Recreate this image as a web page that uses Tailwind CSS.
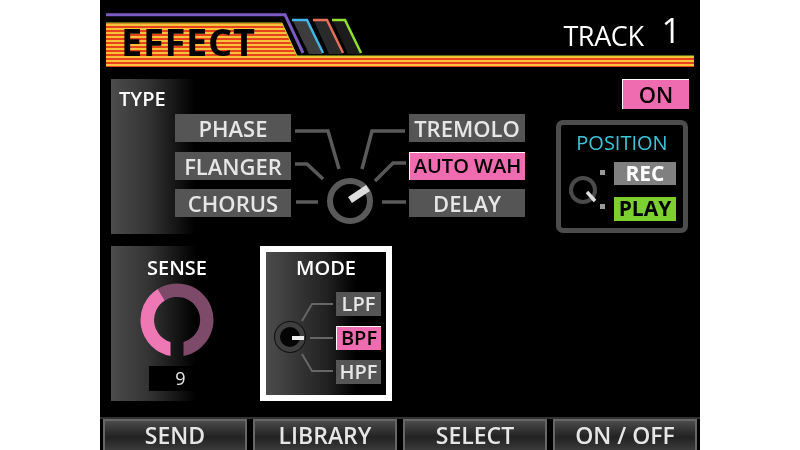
<!DOCTYPE html>
<html lang="en">
  <head>
    <meta charset="UTF-8" />
    <title>Effect</title>
    <script src="https://cdn.jsdelivr.net/npm/@tailwindcss/browser@4"></script>
  </head>
  <body class="bg-white font-['Open_Sans',sans-serif]">
    <div class="w-[600px] h-[450px] mx-auto bg-black flex flex-col text-[#e6e6e6] overflow-hidden blur-[0.3px]">
      <!-- Header -->
      <div class="relative h-[79px] shrink-0">
        <svg class="absolute inset-0" width="600" height="79" viewBox="100 0 600 79">
          <defs>
            <pattern id="stripes" width="4" height="4" patternUnits="userSpaceOnUse" y="24">
              <rect width="4" height="2" fill="#fbc13a" />
              <rect y="2" width="4" height="2" fill="#e6431b" />
            </pattern>
          </defs>
          <polygon points="106,23 282,23 297,56 694,56 694,67 106,67" fill="url(#stripes)" />
          <path d="M106 23H282L297 56H694" fill="none" stroke="#c8d22e" stroke-width="1" />
          <path d="M106 14.7H285L303 53" fill="none" stroke="#7a5cc0" stroke-width="3" />
          <polygon points="293,21 307,21 322,54 309,54" fill="#3d3d3d" />
          <polygon points="314,21 327,21 342,54 329,54" fill="#2a2a2a" />
          <polygon points="333,21 345,21 360,54 348,54" fill="#1c1c1c" />
          <path d="M292 20H307L323 53" fill="none" stroke="#3fb8e8" stroke-width="2.5" />
          <path d="M313 20H327L343 53" fill="none" stroke="#e8705a" stroke-width="2.5" />
          <path d="M332 20H345L361 53" fill="none" stroke="#8fe030" stroke-width="2.5" />
        </svg>
        <div class="relative flex items-start pl-[21px] pr-[19px]">
          <span class="mt-[15px] text-[38px] leading-[53px] font-bold tracking-[0.7px] text-black">EFFECT</span>
          <span class="ml-auto mt-[18px] text-[27px] leading-[35px] font-medium text-white tracking-[-0.4px]">TRACK</span>
          <span class="ml-[18px] mt-[7px] text-[34px] leading-[46px] font-medium text-white">1</span>
        </div>
      </div>

      <!-- Type row -->
      <div class="flex h-[155px] shrink-0 pl-[11px] pr-[11px]">
        <div class="w-[415px] bg-[linear-gradient(to_right,#4c4c4c,#333_45%,#000)] bg-no-repeat bg-[length:84px_100%]">
          <div class="h-[35px] pl-[8px] pt-[7px] text-[20px] leading-[26px] font-semibold text-white">TYPE</div>
          <div class="flex h-[103px] pl-[64px]">
            <div class="flex flex-col justify-between w-[116px] text-[22px] leading-[28px] text-center font-semibold">
              <div class="h-[28px] bg-[#555]">PHASE</div>
              <div class="h-[28px] bg-[#555]">FLANGER</div>
              <div class="h-[28px] bg-[#555]">CHORUS</div>
            </div>
            <svg class="shrink-0 overflow-visible" width="118" height="103" viewBox="0 0 118 103" fill="none" stroke="#5a5a5a" stroke-width="3.5">
              <path d="M4 17H37L48 55" />
              <path d="M4 50H16L32 65" />
              <path d="M5 88H27" />
              <path d="M71 55L81 17H114" />
              <path d="M84 67L102 49H115" />
              <path d="M91 88H115" />
              <circle cx="59" cy="87" r="20" stroke-width="6" />
              <path d="M59 86L77 74" stroke="#ddd" stroke-width="7" />
            </svg>
            <div class="flex flex-col justify-between w-[116px] text-[22px] leading-[28px] text-center font-semibold">
              <div class="h-[28px] bg-[#555]">TREMOLO</div>
              <div class="h-[28px] bg-[#f06cb0] border-t border-l border-white text-black text-[20px] leading-[26px] font-semibold whitespace-nowrap">AUTO WAH</div>
              <div class="h-[28px] bg-[#555]">DELAY</div>
            </div>
          </div>
        </div>
        <div class="ml-auto w-[133px] flex flex-col">
          <div class="self-end w-[67px] h-[30px] bg-[#f06cb0] border-t border-l border-white text-black text-[22px] leading-[28px] font-semibold text-center">ON</div>
          <div class="mt-[11px] w-[132px] h-[113px] rounded-[7px] border-[5px] border-[#4c4c4c] flex flex-col">
            <div class="h-[33px] pt-[4px] text-[20px] leading-[27px] text-center font-medium text-[#3fc4dc]">POSITION</div>
            <div class="flex">
              <svg class="shrink-0 ml-[4px]" width="49" height="64" viewBox="0 0 49 64" fill="none">
                <circle cx="18" cy="32" r="12" stroke="#4a4a4a" stroke-width="4" />
                <path d="M22 34L30 43" stroke="#ddd" stroke-width="3.5" />
                <rect x="35" y="12" width="5" height="5" fill="#999" />
                <rect x="35" y="46" width="5" height="5" fill="#999" />
              </svg>
              <div class="flex flex-col w-[62px] gap-[12px] pt-[4px] text-[21px] leading-[23px] text-center font-bold">
                <div class="h-[23px] bg-[#808080] text-white">REC</div>
                <div class="h-[24px] bg-[#7ccf2e] text-black">PLAY</div>
              </div>
            </div>
          </div>
        </div>
      </div>

      <!-- Sense and mode row -->
      <div class="flex h-[155px] shrink-0 mt-[12px] pl-[11px]">
        <div class="w-[132px] flex flex-col items-center bg-[linear-gradient(to_right,#4c4c4c,#333_45%,#000)] bg-no-repeat bg-[length:85px_100%]">
          <div class="mt-[9px] text-[20px] leading-[26px] font-semibold text-white">SENSE</div>
          <svg class="mt-[1px]" width="76" height="76" viewBox="-38 -38 76 76">
            <path d="M-12.2 -19.5A23 23 0 1 1 6.5 22L6.5 35.9A36.5 36.5 0 1 0 -19.3 -31Z" fill="#7e4a6a" />
            <path d="M-6.5 22A23 23 0 0 1 -12.2 -19.5L-19.3 -31A36.5 36.5 0 0 0 -6.5 35.9Z" fill="#ee78b4" />
          </svg>
          <div class="mt-[8px] w-[57px] h-[25px] bg-black text-[18px] leading-[25px] text-center pl-[7px]">9</div>
        </div>
        <div class="ml-[17px] w-[132px] h-[155px] border-[6px] border-white bg-[linear-gradient(to_right,#4c4c4c,#222_50%,#000_75%)]">
          <div class="mt-[3px] text-[20px] leading-[26px] font-semibold text-white text-center">MODE</div>
          <div class="flex mt-[11px]">
            <svg class="shrink-0" width="70" height="100" viewBox="266 293 70 100" fill="none" stroke="#666" stroke-width="2">
              <path d="M302 322L312 305H333" />
              <path d="M310 339H333" />
              <path d="M302 355L312 372H333" />
              <circle cx="290" cy="338" r="16" fill="#111" stroke="none" />
              <circle cx="290" cy="338" r="12.5" stroke="#3f3f3f" stroke-width="5" fill="#050505" />
              <path d="M292 339H304" stroke="#eee" stroke-width="4" />
            </svg>
            <div class="flex flex-col w-[45px] gap-[10px] text-[20px] leading-[24px] text-center font-semibold">
              <div class="h-[24px] bg-[#555]">LPF</div>
              <div class="h-[24px] bg-[#f06cb0] border-t border-l border-white text-black leading-[22px]">BPF</div>
              <div class="h-[24px] bg-[#555]">HPF</div>
            </div>
          </div>
        </div>
      </div>

      <!-- Function buttons -->
      <div class="mt-auto grid grid-cols-4 gap-[6px] px-[3px] pt-[2px] h-[33px] bg-[linear-gradient(to_bottom,#333_2px,#000_2px)] text-[23px] leading-[29px] font-semibold text-center">
        <div class="bg-[linear-gradient(to_bottom,#4a4a4a,#222_55%,#3a3a3a)] border-t-2 border-x-2 border-[#666]">SEND</div>
        <div class="bg-[linear-gradient(to_bottom,#4a4a4a,#222_55%,#3a3a3a)] border-t-2 border-x-2 border-[#666]">LIBRARY</div>
        <div class="bg-[linear-gradient(to_bottom,#4a4a4a,#222_55%,#3a3a3a)] border-t-2 border-x-2 border-[#666]">SELECT</div>
        <div class="bg-[linear-gradient(to_bottom,#4a4a4a,#222_55%,#3a3a3a)] border-t-2 border-x-2 border-[#666]">ON / OFF</div>
      </div>
    </div>
  </body>
</html>
